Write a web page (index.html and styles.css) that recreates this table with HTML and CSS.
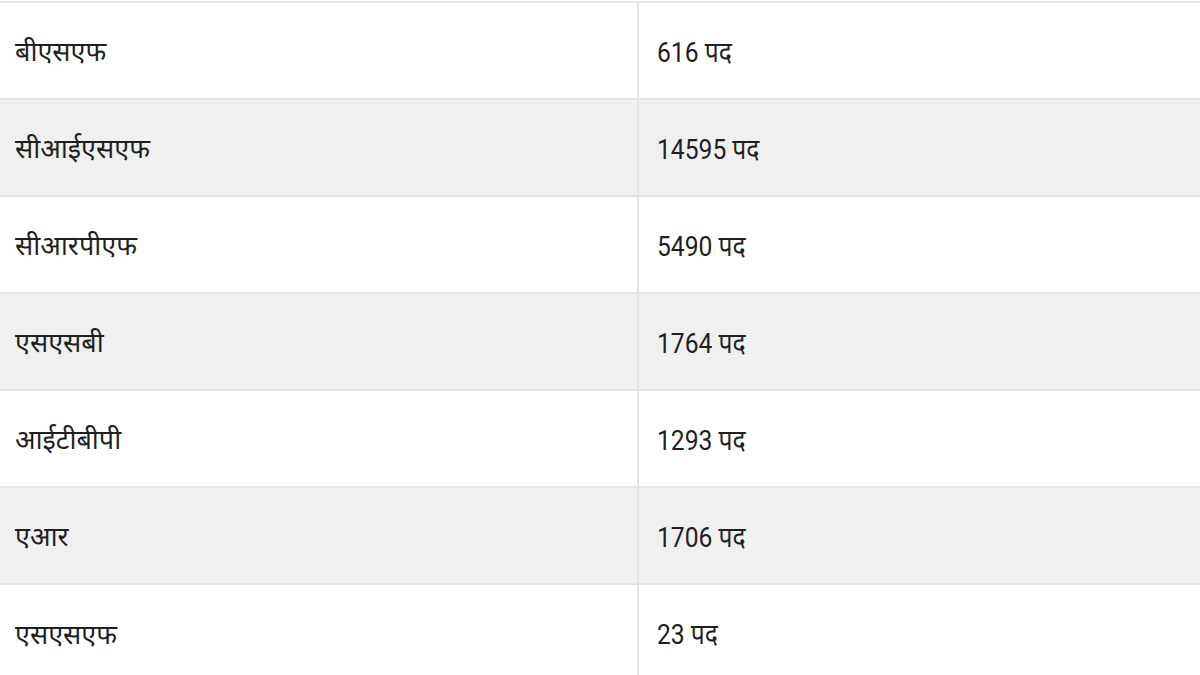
FILE: index.html
```html
<!DOCTYPE html>
<html lang="hi">
<head>
<meta charset="utf-8">
<link rel="stylesheet" href="styles.css">
</head>
<body>
<table class="posts">
  <tbody>
    <tr><td class="name">बीएसएफ</td><td class="count"><span class="val">616 पद</span></td></tr>
    <tr class="alt"><td class="name">सीआईएसएफ</td><td class="count"><span class="val">14595 पद</span></td></tr>
    <tr><td class="name">सीआरपीएफ</td><td class="count"><span class="val">5490 पद</span></td></tr>
    <tr class="alt"><td class="name">एसएसबी</td><td class="count"><span class="val">1764 पद</span></td></tr>
    <tr><td class="name">आईटीबीपी</td><td class="count"><span class="val">1293 पद</span></td></tr>
    <tr class="alt"><td class="name">एआर</td><td class="count"><span class="val">1706 पद</span></td></tr>
    <tr><td class="name">एसएसएफ</td><td class="count"><span class="val">23 पद</span></td></tr>
  </tbody>
</table>
</body>
</html>
```
FILE: styles.css
```css
html, body {
  margin: 0;
  padding: 0;
  background: #ffffff;
}
body {
  font-family: "Roboto", "Noto Sans", sans-serif;
  color: #1f1f1f;
}
.posts {
  width: 1200px;
  border-collapse: collapse;
  margin-top: 1px;
}
.posts td {
  height: 97px;
  padding: 0 0 0 15px;
  border-top: 2px solid #e4e4e4;
  font-size: 27px;
  font-weight: 400;
  vertical-align: middle;
  box-sizing: border-box;
  white-space: nowrap;
}
.posts td.name {
  width: 638px;
  border-right: 2px solid #e4e4e4;
}
.posts td.count {
  padding-left: 18px;
}
.val {
  display: inline-block;
  font-size: 28px;
  transform: scaleX(0.88);
  transform-origin: left center;
}
.posts tr.alt td {
  background: #f0f0f0;
}
```
